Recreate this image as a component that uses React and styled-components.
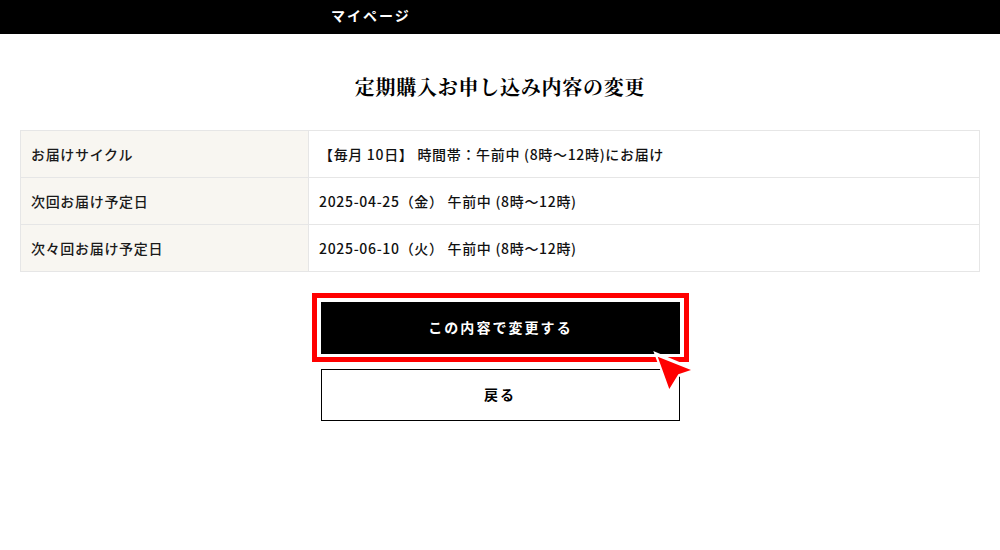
import React from "react";
import styled, { createGlobalStyle } from "styled-components";

const Global = createGlobalStyle`
  html, body { margin: 0; padding: 0; background: #fff; }
  body { font-family: "Noto Sans CJK JP", "Noto Sans", sans-serif; color: #000; }
`;
const Page = styled.div`
  width: 1000px;
  height: 550px;
  overflow: hidden;
  position: relative;
`;
const Header = styled.header`
  height: 34px;
  background: #000;
  color: #fff;
  display: flex;
  align-items: center;
  padding-left: 331px;
  font-size: 14px;
  font-weight: 700;
  letter-spacing: 2px;
  padding-bottom: 4px;
  box-sizing: border-box;
`;
const Title = styled.h1`
  margin: 39px 0 29px;
  height: 28px;
  line-height: 28px;
  text-align: center;
  font-family: "Noto Serif CJK JP", "Liberation Serif", serif;
  font-size: 20px;
  font-weight: 700;
  letter-spacing: 0.75px;
`;
const Table = styled.div`
  margin: 0 20px;
  border: 1px solid #e6e6e6;
  border-bottom: 0;
`;
const Row = styled.div`
  display: grid;
  grid-template-columns: 288px 1fr;
  height: 47px;
  box-sizing: border-box;
  border-bottom: 1px solid #e6e6e6;
  font-size: 14px;
  letter-spacing: 0.68px;
  font-weight: 500;
`;
const Label = styled.div`
  background: #f8f6f1;
  border-right: 1px solid #e6e6e6;
  display: flex;
  align-items: center;
  padding-left: 10px;
  color: #1a1a1a;
`;
const Value = styled.div`
  display: flex;
  align-items: center;
  padding-left: 10px;
  color: #111;
  white-space: pre;
`;
const Actions = styled.div`
  margin-top: 21px;
  display: flex;
  flex-direction: column;
  align-items: center;
  gap: 7px;
`;
const Button = styled.button`
  display: block;
  width: 359px;
  height: 52px;
  box-sizing: border-box;
  border: 1px solid #000;
  background: ${p => (p.$primary ? "#000" : "#fff")};
  color: ${p => (p.$primary ? "#fff" : "#000")};
  font-family: inherit;
  font-size: 14px;
  font-weight: 700;
  letter-spacing: 2.05px;
  cursor: pointer;
  padding: 0 0 2px;
`;
const Highlight = styled.div`
  width: 377px;
  box-sizing: border-box;
  padding: 4px 4px 3px;
  border: 5px solid #f00;
  background: #fff;
  margin-left: 1px;
`;
const Pointer = styled.svg`
  position: absolute;
  left: 645px;
  top: 340px;
  width: 55px;
  height: 55px;
`;

export default function App() {
  return (
    <Page>
      <Global />
      <Header>マイページ</Header>
      <Title>定期購入お申し込み内容の変更</Title>
      <Table>
        <Row>
          <Label>お届けサイクル</Label>
          <Value>{"【毎月 10日】 時間帯：午前中 (8時～12時)にお届け"}</Value>
        </Row>
        <Row>
          <Label>次回お届け予定日</Label>
          <Value>{"2025-04-25（金） 午前中 (8時～12時)"}</Value>
        </Row>
        <Row>
          <Label>次々回お届け予定日</Label>
          <Value>{"2025-06-10（火） 午前中 (8時～12時)"}</Value>
        </Row>
      </Table>
      <Actions>
        <Highlight>
          <Button $primary>この内容で変更する</Button>
        </Highlight>
        <Button>戻る</Button>
      </Actions>
      <Pointer viewBox="0 0 55 55">
        <polygon points="8.3,11 51,29 34,37 24,54" fill="#fff" />
        <polygon points="12.7,16.7 46,30 33.3,34.3 24.3,49" fill="#f00" />
      </Pointer>
    </Page>
  );
}
